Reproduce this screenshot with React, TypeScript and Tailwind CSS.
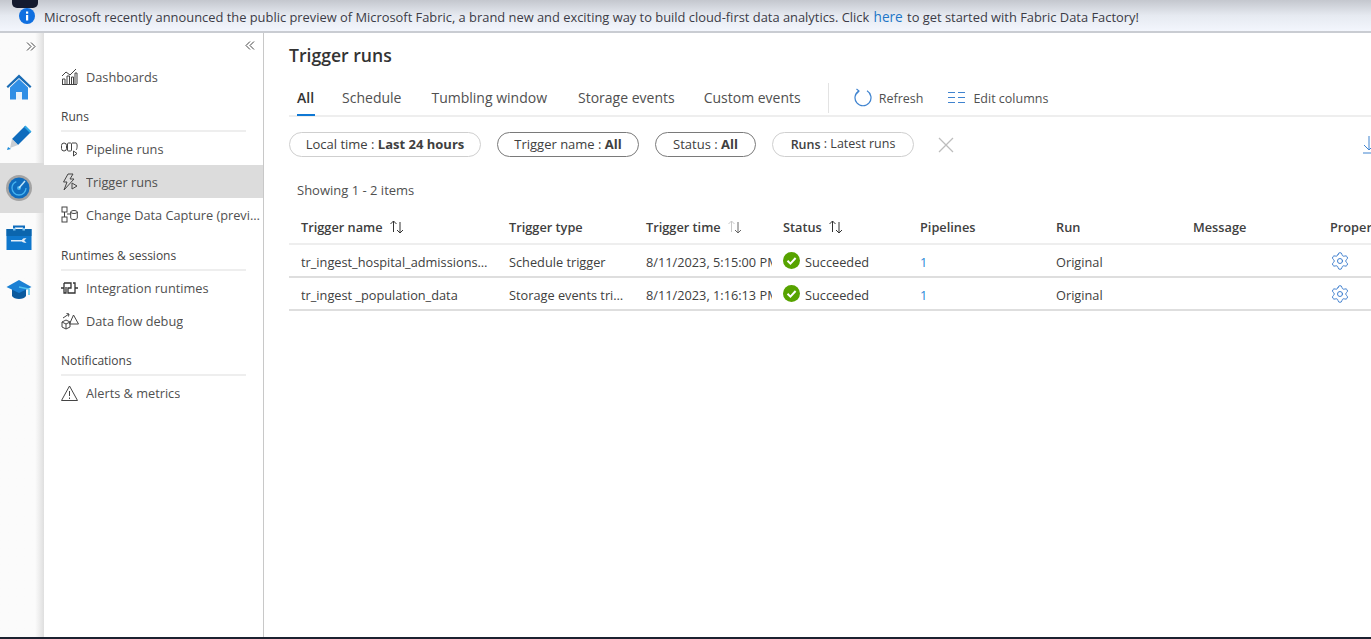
import React from "react";
import { Settings } from "lucide-react";

const font = "font-['Open_Sans','Noto_Sans',sans-serif]";

function Home() {
  return (
    <svg width="26" height="26" viewBox="0 0 26 26">
      <path d="M4 13.5 L13 5 L22 13.5 V25.5 H16 V18 H10 V25.5 H4 Z" fill="#2f8ee5" />
      <rect x="10" y="18" width="6" height="7.5" fill="#e8f2fb" />
      <path d="M13 0.5 L25.5 12.5 L24 14 L13 4 L2 14 L0.5 12.5 Z" fill="#1a6cb5" />
    </svg>
  );
}
function Pencil() {
  return (
    <svg width="26" height="26" viewBox="0 0 26 26">
      <path d="M6 15 L19 2 L25 8 L12 21 Z" fill="#0f6cbd" />
      <path d="M18 3 L19.5 1.5 L25.5 7.5 L24 9 Z" fill="#2ea8e6" />
      <path d="M6 15 L12 21 L4 24 Z" fill="#c9ced3" />
      <path d="M2 23 L1 26 L5 25 Z" fill="#1b8ad8" />
    </svg>
  );
}
function Radar() {
  return (
    <svg width="26" height="26" viewBox="0 0 26 26">
      <circle cx="13" cy="13" r="13" fill="#a3a3a3" />
      <circle cx="13" cy="13" r="10.5" fill="#0f6cbd" />
      <circle cx="13" cy="13" r="7" fill="none" stroke="#46b3ef" strokeWidth="1.3" strokeDasharray="30 14" />
      <circle cx="13" cy="13" r="2" fill="#46b3ef" />
      <path d="M13 13 L19 6" stroke="#bfe6fb" strokeWidth="1.5" />
    </svg>
  );
}
function Toolbox() {
  return (
    <svg width="26" height="26" viewBox="0 0 26 26">
      <path d="M8 5 V1.5 H18 V5" fill="none" stroke="#0f6cbd" strokeWidth="2" />
      <rect x="0.5" y="4" width="25" height="21" fill="#0f77cc" />
      <rect x="0.5" y="4" width="25" height="7" fill="#0b65ad" />
      <rect x="7" y="3" width="2.5" height="2.5" fill="#7cc4f2" />
      <rect x="16.5" y="3" width="2.5" height="2.5" fill="#7cc4f2" />
      <path d="M5 15 H16 C16.5 13.5 18 13 20.5 13.5 L18.5 15 V16 L20.5 17.5 C18 18 16.5 17.5 16 16.5 H5 Z" fill="#e3eef8" />
    </svg>
  );
}
function Cap() {
  return (
    <svg width="26" height="22" viewBox="0 0 26 22" className="mt-[3px]">
      <path d="M6 10 V17 C8 21 18 21 20 17 V10 Z" fill="#0b5a9e" />
      <path d="M0.5 8 L13 1 L25.5 8 L13 14 Z" fill="#1a80d4" />
      <path d="M13 8 L23 10 V16" fill="none" stroke="#4fc3f0" strokeWidth="1.5" />
    </svg>
  );
}
const stroke = { fill: "none", stroke: "#444", strokeWidth: 1 };
function Dash() {
  return (
    <svg width="17" height="17" viewBox="0 0 17 17" {...stroke}>
      <path d="M1 8 L5 4 L9 7 L15 1" />
      <path d="M1 16.5 H16 M1.5 16 V11 H4 V16 M6 16 V8 H8.5 V16 M10.5 16 V9 H12.5 V16 M14 16 V5 H16 V16" />
    </svg>
  );
}
function PipeRuns() {
  return (
    <svg width="17" height="17" viewBox="0 0 17 17" {...stroke}>
      <rect x="0.5" y="3" width="5" height="8" rx="2.5" />
      <rect x="6.5" y="3" width="4" height="8" rx="1" />
      <path d="M11 3 H15 C16.5 3 16.5 9 15 10 M12.5 11 V16 L16 13.5 Z" />
    </svg>
  );
}
function TrigRuns() {
  return (
    <svg width="17" height="18" viewBox="0 0 17 18" {...stroke}>
      <path d="M7 1 H12 L9 6 H13 L3 17 L6 9 H2.5 Z" />
      <path d="M11 10 V16 L16 13 Z" />
    </svg>
  );
}
function Cdc() {
  return (
    <svg width="17" height="18" viewBox="0 0 17 18" {...stroke}>
      <rect x="1" y="1" width="5" height="5" />
      <rect x="1" y="11" width="5" height="5" />
      <path d="M6 8 H10 M3.5 6 V11" />
      <ellipse cx="13" cy="6" rx="3.3" ry="1.5" />
      <path d="M9.7 6 V12 C9.7 14 16.3 14 16.3 12 V6" />
    </svg>
  );
}
function IntRun() {
  return (
    <svg width="17" height="14" viewBox="0 0 17 14" fill="none" stroke="#333" strokeWidth="1.3">
      <path d="M0 7 H3 M14 7 H17 M3 2 H10 V7 H7 V12 H14 V2 H12 M3 2 V12 H5 V6" />
    </svg>
  );
}
function Flow() {
  return (
    <svg width="18" height="18" viewBox="0 0 18 18" {...stroke}>
      <path d="M12.5 3 L17.5 12 H8.5 Z" />
      <path d="M1 10 L5 8 L9 10 V15 L5 17 L1 15 Z M1 10 L5 12 L9 10 M5 12 V17" />
      <path d="M2 6 L8 2 M5.5 1.5 L8 2 L7.5 4.5" />
    </svg>
  );
}
function Warn() {
  return (
    <svg width="17" height="16" viewBox="0 0 17 16" {...stroke}>
      <path d="M8.5 1 L16.5 15.5 H0.5 Z" />
      <path d="M8.5 6 V11 M8.5 12.5 V14" />
    </svg>
  );
}
function Check() {
  return (
    <svg width="17" height="17" viewBox="0 0 17 17" className="-mt-[6px]">
      <circle cx="8.5" cy="8.5" r="8.5" fill="#57a300" />
      <path d="M4.5 8.8 L7.4 11.6 L12.6 6" fill="none" stroke="#fff" strokeWidth="2" />
    </svg>
  );
}
function Sort({ dim }: { dim?: boolean }) {
  return (
    <svg width="16" height="14" viewBox="0 0 16 14" fill="none" strokeWidth="1" className="-mt-[3px]">
      <path d="M4.5 12 V1 M1.5 4 L4.5 1 L7.5 4" stroke={dim ? "#c8c8c8" : "#333"} />
      <path d="M11 2 V13 M8 10 L11 13 L14 10" stroke={dim ? "#666" : "#333"} />
    </svg>
  );
}

function RailItem({ children, active }: { children: React.ReactNode; active?: boolean }) {
  return (
    <div className={`flex h-[50px] w-full items-center pl-[6px] ${active ? "bg-[#dcdcdc]" : ""}`}>{children}</div>
  );
}

function NavItem({ icon, label, active }: { icon: React.ReactNode; label: string; active?: boolean }) {
  return (
    <div className={`flex h-[33px] items-center pl-[17px] ${active ? "bg-[#dcdcdc]" : ""}`}>
      <span className="flex w-[25px] shrink-0 justify-start">{icon}</span>
      <span className="truncate pt-[2px] text-[12.75px] text-[#505050]">{label}</span>
    </div>
  );
}

function NavHead({ label }: { label: string }) {
  return (
    <div className="mx-[17px] border-b-2 border-[#eeeeee] pb-[4px] pt-[1px] text-[12px] font-medium leading-[18px] text-[#444]">{label}</div>
  );
}

function Pill({ children, strong, className = "" }: { children: React.ReactNode; strong?: boolean; className?: string }) {
  return (
    <div
      className={`flex h-[25px] shrink-0 items-center rounded-full border bg-white px-2 text-[13px] text-[#404040] ${strong ? "border-[#7a7a7a]" : "border-[#cfcfcf]"} ${className}`}
    >
      {children}
    </div>
  );
}

const cols = ["w-[208px]", "w-[137px]", "w-[137px]", "w-[137px]", "w-[136px]", "w-[137px]", "w-[137px]", "w-[60px]"];

function Row({ name, type, time }: { name: string; type: string; time: string }) {
  return (
    <div className="flex h-[33px] items-center border-b-2 border-[#dedede] pl-3 pt-[5px] text-[12.75px] text-[#404040]">
      <div className={`${cols[0]} shrink-0 truncate pr-[21px]`}>{name}</div>
      <div className={`${cols[1]} shrink-0 truncate pr-[20px]`}>{type}</div>
      <div className={`${cols[2]} shrink-0 overflow-hidden whitespace-nowrap pr-[11px]`}>
        <div className="overflow-hidden">{time}</div>
      </div>
      <div className={`${cols[3]} flex shrink-0 items-center gap-[5px]`}>
        <Check />
        <span>Succeeded</span>
      </div>
      <div className={`${cols[4]} shrink-0 text-[#2b88d8]`}>1</div>
      <div className={`${cols[5]} shrink-0`}>Original</div>
      <div className={`${cols[6]} shrink-0`} />
      <div className={`${cols[7]} -mt-[5px] shrink-0`}>
        <Settings size={20} strokeWidth={1.2} color="#3f7fcf" />
      </div>
    </div>
  );
}

function Head({ width, label, sort }: { width: string; label: string; sort?: React.ReactNode }) {
  return (
    <div className={`${width} flex shrink-0 items-center gap-[6px] whitespace-nowrap`}>
      <span>{label}</span>
      {sort}
    </div>
  );
}

export default function App() {
  return (
    <div className={`flex h-[639px] w-[1371px] flex-col overflow-hidden bg-white ${font}`}>
      <div className="relative flex h-[33px] shrink-0 items-end border-b-2 border-[#c9ccd2] bg-gradient-to-b from-[#c4c7ce] via-[#e6eaf1] to-[#f3f6fd] pb-[5px] pl-[19px]">
        <div className="absolute left-[12px] top-0 h-[8px] w-[26px] rounded-b-[5px] bg-[#141a2e]" />
        <svg width="16" height="16" viewBox="0 0 16 16" className="mb-[2px] mr-[9px]">
          <circle cx="8" cy="8" r="8" fill="#0f6fe0" />
          <rect x="7" y="7" width="2.2" height="5.5" fill="#fff" />
          <rect x="7" y="3.5" width="2.2" height="2.2" fill="#fff" />
        </svg>
        <div className="whitespace-nowrap text-[12.88px] leading-[18px] text-[#3c3c46]">
          Microsoft recently announced the public preview of Microsoft Fabric, a brand new and exciting way to build cloud-first data analytics. Click{" "}
          <span className="mx-[1px] text-[13.6px] text-[#2176c7]">here</span> to get started with Fabric Data Factory!
        </div>
      </div>

      <div className="flex min-h-0 flex-1">
        <div className="flex w-[44px] shrink-0 flex-col bg-gradient-to-r from-[#fbfbfb] from-80% to-[#dfdfdf]">
          <div className="flex h-[29px] items-start justify-end pr-2 pt-[9px] text-[#555]">
            <svg width="10" height="9" viewBox="0 0 10 9" fill="none" stroke="#444" strokeWidth="1">
              <path d="M1 0.5 L5 4.5 L1 8.5 M5 0.5 L9 4.5 L5 8.5" />
            </svg>
          </div>
          <RailItem><Home /></RailItem>
          <RailItem><Pencil /></RailItem>
          <div className="h-px" />
          <RailItem active><Radar /></RailItem>
          <RailItem><Toolbox /></RailItem>
          <RailItem><Cap /></RailItem>
        </div>

        <div className="flex w-[220px] shrink-0 flex-col border-r border-[#c8c8c8] bg-white">
          <div className="flex h-[27px] shrink-0 items-start justify-end pr-[8px] pt-[8px]">
            <svg width="10" height="9" viewBox="0 0 10 9" fill="none" stroke="#444" strokeWidth="1">
              <path d="M5 0.5 L1 4.5 L5 8.5 M9 0.5 L5 4.5 L9 8.5" />
            </svg>
          </div>
          <NavItem icon={<Dash />} label="Dashboards" />
          <div className="h-[14px]" />
          <NavHead label="Runs" />
          <NavItem icon={<PipeRuns />} label="Pipeline runs" />
          <NavItem icon={<TrigRuns />} label="Trigger runs" active />
          <NavItem icon={<Cdc />} label="Change Data Capture (preview)" />
          <div className="h-[15px]" />
          <NavHead label="Runtimes & sessions" />
          <NavItem icon={<IntRun />} label="Integration runtimes" />
          <NavItem icon={<Flow />} label="Data flow debug" />
          <div className="h-[14px]" />
          <NavHead label="Notifications" />
          <NavItem icon={<Warn />} label="Alerts & metrics" />
        </div>

        <div className="min-w-0 flex-1 overflow-hidden pl-[25px]">
          <div className="pt-[8px] text-[17.6px] font-semibold leading-[28px] text-[#333]">Trigger runs</div>

          <div className="mt-[10px] flex h-[38px] items-center border-b-2 border-[#eeeeee] pl-2 pt-[1px] text-[14px] text-[#505050]">
            <div className="relative mr-[28px] font-semibold text-[#333]">
              All
              <div className="absolute -bottom-[8px] left-0 h-[2px] w-[18px] bg-[#0f78d4]" />
            </div>
            <div className="mr-[30px]">Schedule</div>
            <div className="mr-[31px]">Tumbling window</div>
            <div className="mr-[29px]">Storage events</div>
            <div>Custom events</div>
            <div className="ml-[27px] mr-[25px] h-[30px] w-px bg-[#e3e3e3]" />
            <svg width="18" height="19" viewBox="0 0 18 19" fill="none" stroke="#3f83cf" strokeWidth="1.2" className="mr-[7px]">
              <path d="M5 2.8 A8 8 0 1 0 13 2.8 M2.5 1 L5 3 L3 5.5" />
            </svg>
            <span className="mr-[25px] mt-[3px] text-[12.5px]">Refresh</span>
            <svg width="17" height="11" viewBox="0 0 17 11" fill="none" stroke="#3f83cf" strokeWidth="1" className="mr-[8px]">
              <path d="M0 .5 H7 M10 .5 H17 M0 5.5 H7 M10 5.5 H17 M0 10.5 H7 M10 10.5 H17" />
            </svg>
            <span className="mt-[3px] text-[12.5px]">Edit columns</span>
          </div>

          <div className="mt-[15px] flex items-center">
            <Pill className="w-[192px] justify-center">
              Local time :&nbsp;<b className="font-bold">Last 24 hours</b>
            </Pill>
            <Pill strong className="ml-[16px] w-[142px] justify-center">
              Trigger name :&nbsp;<b className="font-bold">All</b>
            </Pill>
            <Pill strong className="ml-[16px] w-[101px] justify-center">
              Status :&nbsp;<b className="font-bold">All</b>
            </Pill>
            <Pill className="ml-[16px] w-[142px] justify-center">
              <b className="mt-[2px] text-[12.5px] font-semibold">Runs</b>
              <span className="text-[12.5px]">&nbsp;: Latest runs</span>
            </Pill>
            <svg width="16" height="16" viewBox="0 0 16 16" fill="none" stroke="#bdbdbd" strokeWidth="1.3" className="ml-[24px] shrink-0">
              <path d="M1 1 L15 15 M15 1 L1 15" />
            </svg>
            <svg width="12" height="18" viewBox="0 0 12 18" fill="none" stroke="#3f83cf" strokeWidth="1" className="ml-[409px] shrink-0">
              <path d="M6 0 V13 M1 9 L6 14 L11 9 M0 17 H12" />
            </svg>
          </div>

          <div className="mt-[24px] pl-2 text-[13px] leading-[18px] text-[#505050]">Showing 1 - 2 items</div>

          <div className="mt-[14px] w-[1200px]">
            <div className="flex h-[32px] items-center border-b-2 border-[#eeeeee] pl-3 text-[12.75px] font-semibold text-[#404040]">
              <Head width={cols[0]} label="Trigger name" sort={<Sort />} />
              <Head width={cols[1]} label="Trigger type" />
              <Head width={cols[2]} label="Trigger time" sort={<Sort dim />} />
              <Head width={cols[3]} label="Status" sort={<Sort />} />
              <Head width={cols[4]} label="Pipelines" />
              <Head width={cols[5]} label="Run" />
              <Head width={cols[6]} label="Message" />
              <Head width={cols[7]} label="Properties" />
            </div>
            <Row name="tr_ingest_hospital_admissions_weekly" type="Schedule trigger" time="8/11/2023, 5:15:00 PM" />
            <Row name="tr_ingest _population_data" type="Storage events trigger" time="8/11/2023, 1:16:13 PM" />
          </div>
        </div>
      </div>
      <div className="h-[2px] shrink-0 bg-[#1c2230]" />
    </div>
  );
}
